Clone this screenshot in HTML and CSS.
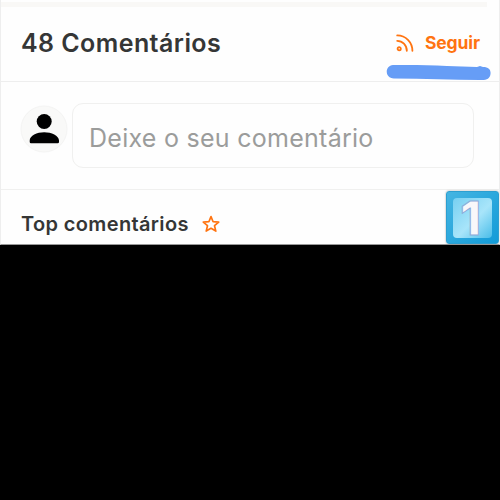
FILE: index.html
```html
<!DOCTYPE html>
<html lang="pt-BR">
<head>
<meta charset="utf-8">
<title>Comentários</title>
<link rel="stylesheet" href="styles.css">
</head>
<body>
<main class="panel">
  <div class="strip"></div>
  <header class="header">
    <h1 class="title"><span>48 Comentários</span></h1>
    <a class="follow">
      <svg class="rss" viewBox="0 0 18 18" width="18" height="18"><circle cx="3.2" cy="14.8" r="1.6"/><path d="M1.2 6.8c5.2 0 9.6 4.4 9.6 10M1.2 1.4c8.4 0 15.2 6.8 15.2 15.4"/></svg>
      <span>Seguir</span>
    </a>
    <svg class="marker" viewBox="0 0 106 18" width="106" height="18"><path d="M7 1C25 1 43 .8 61 2L91 3L94 2L97 3C103 3 105 6 104.500 10C104 15 100 16.500 94 16C66 16 38 14.500 8 14.500C-1.500 14-1.500 2 7 1Z"/></svg>
  </header>
  <section class="compose">
    <svg class="avatar" viewBox="0 0 48 48" width="48" height="48"><circle class="disc" cx="24" cy="24" r="23"/><circle cx="24.200" cy="16.500" r="7.500"/><path d="M9.700 38.300V35.500C9.700 30.500 17 27.200 24.200 27.200S39 30.500 39 35.500v1.500q0 1.300-1.300 1.300H11q-1.300 0-1.300-1.300Z"/></svg>
    <div class="field"><span>Deixe o seu comentário</span></div>
  </section>
  <section class="top">
    <h2 class="subtitle"><span>Top comentários</span></h2>
    <svg class="star" viewBox="0 0 18 18" width="18" height="18"><path d="M9 1.600 11.100 6.700 16.700 7.100 12.500 10.700 13.800 16.100 9 13.300 4.200 16.100 5.500 10.700 1.300 7.100 6.900 6.700Z"/></svg>
    <div class="badge"><span class="tile"><span class="digit">1</span></span></div>
  </section>
</main>
</body>
</html>
```
FILE: styles.css
```css
* { box-sizing: border-box; }
body { margin: 0; background: #000; font-family: Inter, sans-serif; color: #353636; }
.panel { height: 245px; background: #fefefe; border: solid #eee; border-width: 0 1px; border-bottom: 1px solid #999; overflow: hidden; }
.strip { height: 5px; margin: 2px 12px 0 0; background: #f9f8f6; }
.header { position: relative; height: 75px; display: flex; align-items: center; justify-content: space-between; padding: 0 19px 2px 20px; border-bottom: 1px solid #eee; }
.title { margin: 0; font-size: 25px; font-weight: 600; line-height: 32px; letter-spacing: .43px; white-space: nowrap; }
.follow { display: flex; align-items: center; gap: 11px; margin-top: -1px; color: #ff7411; font-size: 17.5px; font-weight: 700; letter-spacing: -.1px; }
.rss { fill: none; stroke: #ff7411; stroke-width: 1.8; stroke-linecap: round; }
.marker { position: absolute; left: 385px; top: 57px; fill: #669df6; z-index: 1; }
.compose { height: 108px; display: flex; align-items: flex-start; padding: 21px 25px 0 19px; border-bottom: 1px solid #f0f0ef; }
.avatar { flex: none; margin-top: 2px; }
.disc { fill: #f9f9f8; stroke: #f4f4f3; stroke-width: 1; }
.field { flex: 1; height: 65px; margin-left: 4px; padding: 4px 0 0 16px; display: flex; align-items: center; border: 1px solid #f0f0ef; border-radius: 11px; font-size: 25px; letter-spacing: .27px; color: #9b9c9b; white-space: nowrap; }
.top { position: relative; height: 54px; display: flex; align-items: center; gap: 13px; padding: 14px 0 0 20px; }
.subtitle { margin: 0; font-size: 20px; font-weight: 600; letter-spacing: .36px; white-space: nowrap; }
.star { fill: none; stroke: #ff7411; stroke-width: 1.7; stroke-linejoin: round; }
.badge { position: absolute; left: 445px; top: 1px; width: 53px; height: 53px; padding: 6px; border-radius: 3px; background: linear-gradient(135deg, #45b5e2, #129bd8); border: 1px solid #2d9fd0; box-shadow: 0 0 2px #999; }
.tile { display: flex; align-items: center; justify-content: center; height: 40px; border-radius: 4px; background: linear-gradient(135deg, #77cff1, #a8e5fa 55%, #4abde9); }
.digit { margin-left: -4px; font-size: 47px; line-height: 40px; font-weight: 800; color: #f8f7fa; -webkit-text-stroke: 1px #8cabd9; }
```
